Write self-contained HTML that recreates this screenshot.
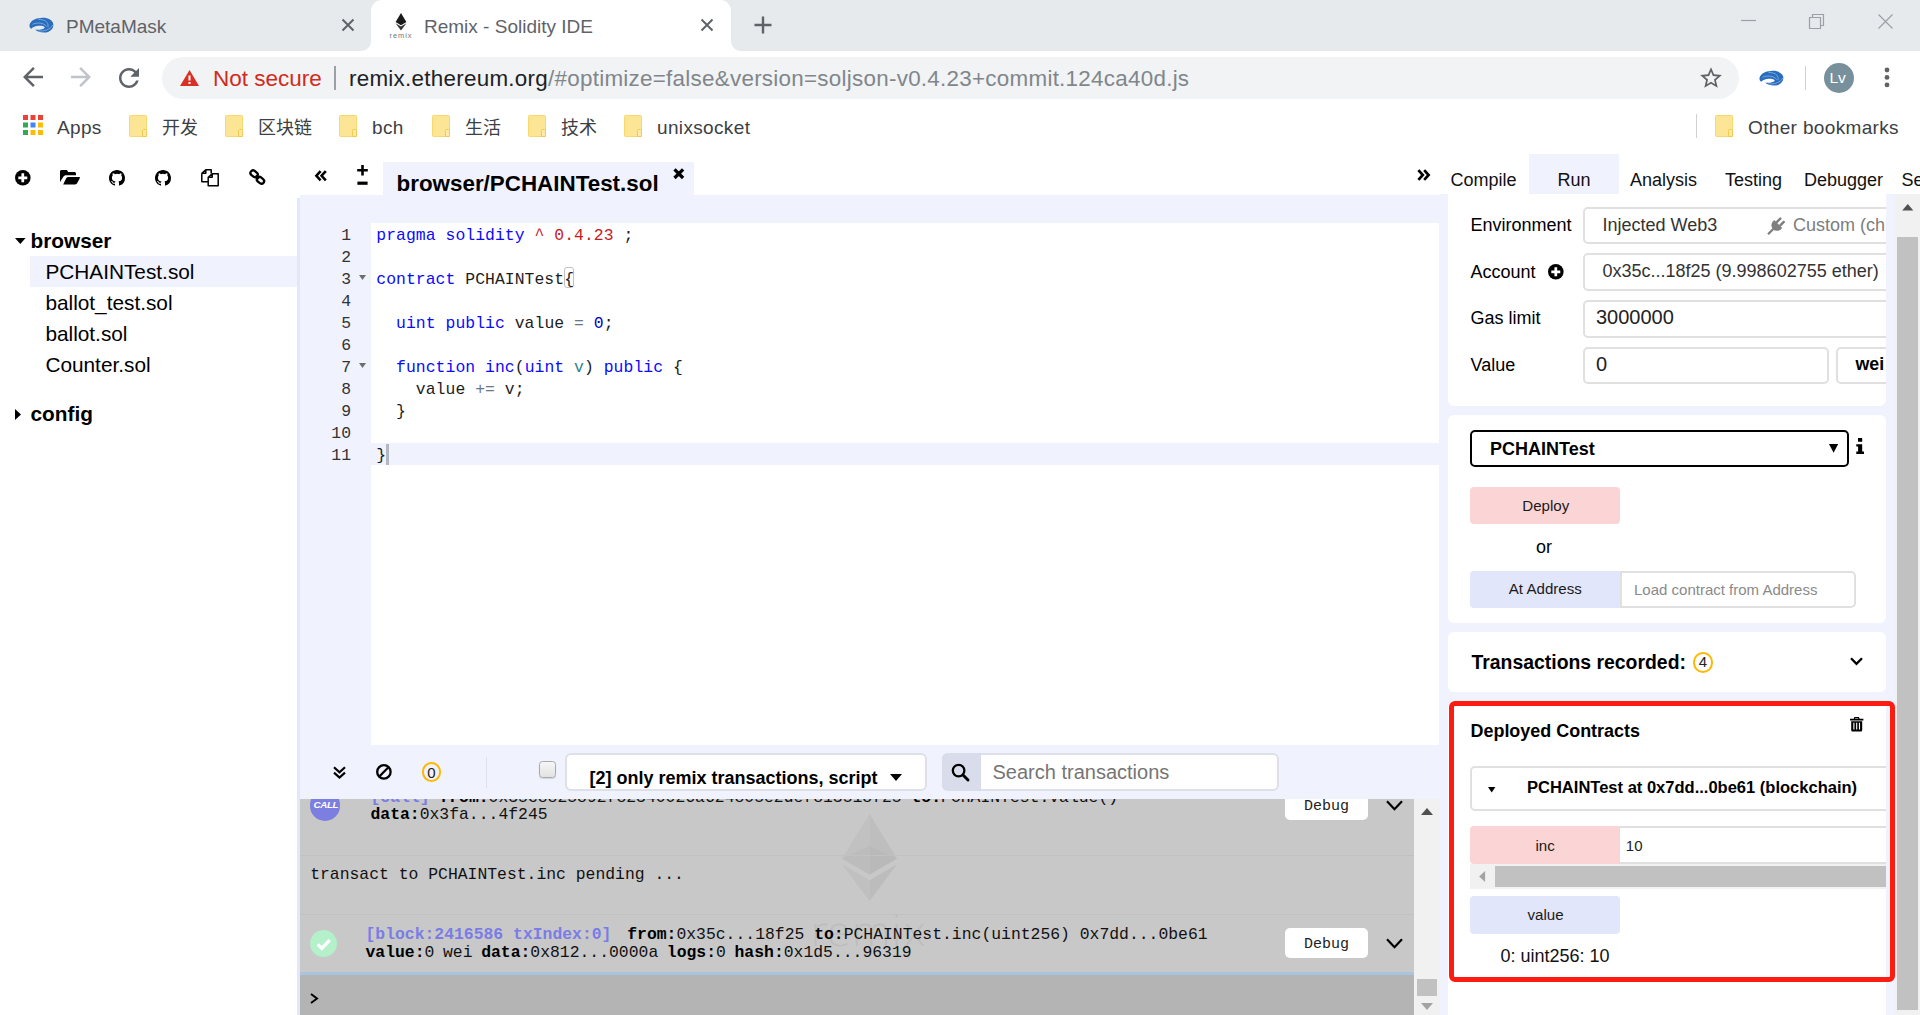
<!DOCTYPE html>
<html lang="en">
<head>
<meta charset="utf-8">
<title>Remix - Solidity IDE</title>
<style>
*{box-sizing:border-box;margin:0;padding:0}
html,body{width:1920px;height:1015px;overflow:hidden;background:#fff}
body{font-family:"Liberation Sans","Noto Sans CJK SC",sans-serif;color:#000;position:relative}
.abs{position:absolute}
.t{position:absolute;white-space:nowrap;line-height:1}
svg{position:absolute;overflow:visible}
/* ---------- browser chrome ---------- */
#tabstrip{left:0;top:0;width:1920px;height:51px;background:#e7eaed}
#acttab{left:371px;top:0;width:360px;height:51px;background:#fff;border-radius:11px 11px 0 0}
#acttab:before,#acttab:after{content:"";position:absolute;bottom:0;width:10px;height:10px}
#acttab:before{left:-10px;background:radial-gradient(circle at 0 0,#e7eaed 9.5px,#fff 10.5px)}
#acttab:after{right:-10px;background:radial-gradient(circle at 100% 0,#e7eaed 9.5px,#fff 10.5px)}
#toolbar{left:0;top:51px;width:1920px;height:99px;background:#fff}
#omni{left:162px;top:57px;width:1577px;height:42px;border-radius:21px;background:#f1f3f4}
.ui{font-family:"Liberation Sans","Noto Sans CJK SC",sans-serif;color:#3c4043}
.bm{font-size:19px;letter-spacing:.35px;color:#3c4043;top:117.5px}
.bm.cj{font-size:18px;letter-spacing:0;top:119px}
.fold{position:absolute;top:115px;width:18px;height:21.500px;border-radius:1.500px;background:#fde596;border:1px solid #f8d76f}
.fold:after{content:"";position:absolute;right:-1px;bottom:-1px;width:3.500px;height:6px;border:1px solid #f3c94f;border-radius:1.500px 1.500px 0 0;background:#fdeaa8}
/* ---------- remix ---------- */
#lav{left:300px;top:195px;width:1620px;height:820px;background:#f0f2fe}
#rtabsbg{left:298px;top:150px;width:1622px;height:45px;background:#fff}
#gut{left:320px;top:224.900px;width:31px;text-align:right;font:16.400px/22px "Liberation Mono",monospace;color:#333}
#code{left:376.300px;top:224.900px;font:16.400px/22px "Liberation Mono",monospace;color:#1d1d1d;letter-spacing:.05px}
#code .k{color:#0a0aff}#code .r{color:#c8191d}#code .o{color:#687687}#code .n{color:#0000cd}#code .f{color:#0a0aff}#code .p{color:#318495}
#term{left:300px;top:799px;width:1140px;height:216px;overflow:hidden}
.mono{font:16.400px/19px "Liberation Mono",monospace;color:#111}
.mono b{font-weight:bold;color:#000}.vi{color:#7a7ce6;font-weight:bold}
.dbg{left:985px;width:83px;height:30px;background:#fff;border-radius:5px}
.rt{font-size:18px;top:171px;color:#111}
#rp{left:1448px;top:195px;width:438px;height:820px;overflow:hidden}
#rpi{left:1px;top:0;width:437px;height:820px}
.card{left:-1px;width:438px;background:#fff;border-radius:6px}
.lb{font-size:18px}
.inp{background:#fff;border:2px solid #e0e0e0;border-radius:5px}
</style>
</head>
<body>
<!-- ======= BROWSER CHROME ======= -->
<div class="abs" id="tabstrip"></div>
<div class="abs" id="acttab"></div>
<div class="abs" id="toolbar"></div>
<div class="abs" id="omni"></div>

<!-- CHROME-CONTENT -->
<!-- tab 1 -->
<svg style="left:29px;top:17px" width="26" height="16" viewBox="0 0 26 16"><path d="M.5 8C1.500 4 6 1.200 12 1 18 .2 23.500 2.800 24.300 7 25 11.500 21 15.600 15 15.600 11 15.600 8 14.300 6 12.600 9.500 13.200 14.500 12.600 15.500 11 16.500 9.400 13 8.600 9.500 8.700 6.500 8.800 3.800 10 2.300 11.800 1 11.200.3 9.500.5 8Z" fill="#2b6dbd"/><path d="M3.500 7.300C8 5.200 15 5.600 17.600 9.600M9.500 2.600C14.500 2 20 4.600 19 10.200M9 13.900C15 14.600 21.500 12.600 23.800 8" stroke="#8db9ea" stroke-width=".75" fill="none"/></svg>
<div class="t ui" style="left:66px;top:17px;font-size:19px;color:#5f6368">PMetaMask</div>
<svg style="left:341px;top:18px" width="14" height="14" viewBox="0 0 14 14"><path d="M1.5 1.5L12.5 12.5M12.5 1.5L1.5 12.5" stroke="#5f6368" stroke-width="2" fill="none"/></svg>
<!-- tab 2 -->
<svg style="left:389px;top:11.500px" width="24" height="28" viewBox="0 0 24 28"><path d="M12 1L6.6 10 12 13.2 17.4 10Z" fill="#1a1a1a"/><path d="M12 14.4L6.6 11.2 12 18.6 17.4 11.2Z" fill="#333"/><text x="12" y="25.800" font-size="7.500" letter-spacing=".9" font-family="Liberation Sans,sans-serif" text-anchor="middle" fill="#777">remix</text></svg>
<div class="t ui" style="left:424px;top:17px;font-size:19px;color:#5f6368">Remix - Solidity IDE</div>
<svg style="left:700px;top:18px" width="14" height="14" viewBox="0 0 14 14"><path d="M1.5 1.5L12.5 12.5M12.5 1.5L1.5 12.5" stroke="#5f6368" stroke-width="2" fill="none"/></svg>
<svg style="left:754px;top:16px" width="18" height="18" viewBox="0 0 18 18"><path d="M9 0.5V17.5M0.5 9H17.5" stroke="#5f6368" stroke-width="2.4" fill="none"/></svg>
<!-- window controls -->
<svg style="left:1741px;top:13px" width="160" height="18" viewBox="0 0 160 18"><path d="M0 7.5H15" stroke="#9aa0a6" stroke-width="1.2" fill="none"/><path d="M68.5 4.5H79.5V15.5H68.5ZM71.5 4.5V1.5H82.5V12.5H79.5" stroke="#9aa0a6" stroke-width="1.2" fill="none"/><path d="M137.5 1.5L151.5 15.5M151.5 1.5L137.5 15.5" stroke="#9aa0a6" stroke-width="1.2" fill="none"/></svg>
<!-- nav buttons -->
<svg style="left:18px;top:62px" width="30" height="30" viewBox="0 0 24 24"><path d="M20 11H7.83l5.59-5.59L12 4l-8 8 8 8 1.41-1.41L7.83 13H20v-2z" fill="#5f6368"/></svg>
<svg style="left:66px;top:62px" width="30" height="30" viewBox="0 0 24 24"><path d="M12 4l-1.41 1.41L16.17 11H4v2h12.17l-5.58 5.59L12 20l8-8z" fill="#c0c3c7"/></svg>
<svg style="left:114px;top:62.5px" width="30" height="30" viewBox="0 0 24 24"><path d="M17.65 6.35C16.2 4.9 14.21 4 12 4c-4.42 0-7.99 3.58-7.99 8s3.57 8 7.99 8c3.73 0 6.84-2.55 7.73-6h-2.08c-.82 2.33-3.04 4-5.65 4-3.31 0-6-2.69-6-6s2.69-6 6-6c1.66 0 3.14.69 4.22 1.78L13 11h7V4l-2.35 2.35z" fill="#5f6368"/></svg>
<!-- omnibox content -->
<svg style="left:180px;top:70px" width="19" height="16" viewBox="0 0 19 16"><path d="M9.5 0L19 16H0Z" fill="#d93025"/><path d="M8.5 5.5h2v5h-2zM8.5 12h2v2h-2z" fill="#fff"/></svg>
<div class="t" style="left:213px;top:67.800px;font-size:22.5px;color:#d12a20">Not secure</div>
<div class="abs" style="left:334px;top:66px;width:2px;height:24px;background:#9aa0a6"></div>
<div class="t" style="left:349px;top:68px;font-size:22.4px;letter-spacing:0.27px;color:#202124">remix.ethereum.org<span style="color:#80868b">/#optimize=false&amp;version=soljson-v0.4.23+commit.124ca40d.js</span></div>
<svg style="left:1698px;top:65px" width="26" height="26" viewBox="0 0 24 24"><path d="M22 9.24l-7.19-.62L12 2 9.19 8.63 2 9.24l5.46 4.73L5.82 21 12 17.27 18.18 21l-1.63-7.03L22 9.24zM12 15.4l-3.76 2.27 1-4.28-3.32-2.88 4.38-.38L12 6.1l1.71 4.04 4.38.38-3.32 2.88 1 4.28L12 15.4z" fill="#5f6368"/></svg>
<svg style="left:1759px;top:69.5px" width="26" height="16" viewBox="0 0 26 16"><path d="M.5 8C1.500 4 6 1.200 12 1 18 .2 23.500 2.800 24.300 7 25 11.500 21 15.600 15 15.600 11 15.600 8 14.300 6 12.600 9.500 13.200 14.500 12.600 15.500 11 16.500 9.400 13 8.600 9.500 8.700 6.500 8.800 3.800 10 2.300 11.800 1 11.200.3 9.500.5 8Z" fill="#2b6dbd"/><path d="M3.500 7.300C8 5.200 15 5.600 17.600 9.600M9.500 2.600C14.500 2 20 4.600 19 10.200M9 13.900C15 14.600 21.500 12.600 23.800 8" stroke="#8db9ea" stroke-width=".75" fill="none"/></svg>
<div class="abs" style="left:1805px;top:66px;width:1px;height:24px;background:#d0d3d6"></div>
<div class="abs" style="left:1824px;top:63px;width:30px;height:30px;border-radius:15px;background:#78909c"></div>
<div class="t" style="left:1829.5px;top:70px;font-size:15.5px;color:#fff">Lv</div>
<svg style="left:1884px;top:67px" width="6" height="21" viewBox="0 0 6 21"><circle cx="3" cy="3" r="2.4" fill="#5f6368"/><circle cx="3" cy="10.4" r="2.4" fill="#5f6368"/><circle cx="3" cy="17.9" r="2.4" fill="#5f6368"/></svg>
<!-- bookmarks -->
<svg style="left:23px;top:115px" width="20" height="20" viewBox="0 0 20 20"><g><rect x="0" y="0" width="5" height="5" fill="#ea4335"/><rect x="7.5" y="0" width="5" height="5" fill="#ea4335"/><rect x="15" y="0" width="5" height="5" fill="#ea4335"/><rect x="0" y="7.5" width="5" height="5" fill="#34a853"/><rect x="7.5" y="7.5" width="5" height="5" fill="#4285f4"/><rect x="15" y="7.5" width="5" height="5" fill="#fbbc05"/><rect x="0" y="15" width="5" height="5" fill="#34a853"/><rect x="7.5" y="15" width="5" height="5" fill="#fbbc05"/><rect x="15" y="15" width="5" height="5" fill="#fbbc05"/></g></svg>
<div class="t bm" style="left:57px">Apps</div>
<div class="fold" style="left:129px"></div><div class="t bm cj" style="left:162px">开发</div>
<div class="fold" style="left:225px"></div><div class="t bm cj" style="left:258px">区块链</div>
<div class="fold" style="left:339px"></div><div class="t bm" style="left:372px">bch</div>
<div class="fold" style="left:432px"></div><div class="t bm cj" style="left:465px">生活</div>
<div class="fold" style="left:528px"></div><div class="t bm cj" style="left:561px">技术</div>
<div class="fold" style="left:624px"></div><div class="t bm" style="left:657px">unixsocket</div>
<div class="abs" style="left:1696px;top:114px;width:1px;height:24px;background:#d0d3d6"></div>
<div class="fold" style="left:1715px"></div><div class="t bm" style="left:1748px">Other bookmarks</div>
<!-- /CHROME-CONTENT -->

<!-- ======= REMIX PAGE ======= -->
<div class="abs" id="rtabsbg"></div>
<div class="abs" id="lav"></div>

<!-- LEFT-PANEL -->
<!-- left panel icons -->
<svg style="left:14.8px;top:169.6px" width="15.6" height="15.6" viewBox="0 0 16 16"><circle cx="8" cy="8" r="8" fill="#000"/><path d="M6.6 3.4h2.8v3.2h3.2v2.8H9.4v3.2H6.6V9.4H3.4V6.600H6.6z" fill="#fff"/></svg>
<svg style="left:60px;top:169.5px" width="20" height="14.4" viewBox="0 0 20 14.4"><path d="M0 12V1.6C0 .7.7 0 1.6 0h4.6c.9 0 1.6.7 1.6 1.600v.5h6.600c.9 0 1.6.7 1.6 1.600v1.500H6.200c-1.300 0-2.400.6-3 1.700z" fill="#000"/><path d="M3.200 14.4 6.200 8.300c.4-.8 1.300-1.400 2.200-1.400H19c.8 0 1.200.6.800 1.300l-2.700 5c-.400.700-1.200 1.200-2 1.200z" fill="#000"/></svg>
<svg style="left:109.300px;top:169.500px" width="16" height="16" viewBox="0 0 16 16"><path d="M8 0C3.580 0 0 3.580 0 8c0 3.540 2.290 6.530 5.470 7.590.4.070.55-.17.55-.38 0-.19-.01-.82-.01-1.490-2.010.37-2.530-.49-2.690-.94-.09-.23-.48-.94-.82-1.130-.28-.15-.68-.52-.01-.53.63-.01 1.080.58 1.230.82.720 1.210 1.870.87 2.330.66.070-.52.28-.87.51-1.070-1.780-.2-3.640-.89-3.640-3.950 0-.87.31-1.590.82-2.150-.08-.2-.36-1.020.08-2.120 0 0 .67-.21 2.200.82a7.400 7.400 0 0 1 4 0c1.530-1.040 2.200-.82 2.200-.82.44 1.100.16 1.920.08 2.120.51.56.82 1.270.82 2.150 0 3.070-1.870 3.750-3.650 3.950.29.25.54.73.54 1.480 0 1.070-.01 1.930-.01 2.200 0 .21.15.46.55.38A8.013 8.013 0 0 0 16 8c0-4.420-3.580-8-8-8z" fill="#000" fill-rule="evenodd"/></svg>
<svg style="left:154.800px;top:169.500px" width="16" height="16" viewBox="0 0 16 16"><path d="M8 0C3.580 0 0 3.580 0 8c0 3.540 2.290 6.530 5.470 7.590.4.070.55-.17.55-.38 0-.19-.01-.82-.01-1.490-2.010.37-2.530-.49-2.690-.94-.09-.23-.48-.94-.82-1.130-.28-.15-.68-.52-.01-.53.63-.01 1.080.58 1.230.82.720 1.210 1.870.87 2.330.66.070-.52.28-.87.51-1.070-1.780-.2-3.640-.89-3.640-3.950 0-.87.31-1.590.82-2.150-.08-.2-.36-1.020.08-2.120 0 0 .67-.21 2.200.82a7.400 7.400 0 0 1 4 0c1.530-1.040 2.200-.82 2.200-.82.44 1.100.16 1.920.08 2.120.51.56.82 1.270.82 2.150 0 3.070-1.870 3.750-3.650 3.950.29.25.54.73.54 1.480 0 1.070-.01 1.930-.01 2.200 0 .21.15.46.55.38A8.013 8.013 0 0 0 16 8c0-4.420-3.580-8-8-8z" fill="#000" fill-rule="evenodd"/></svg>
<svg style="left:200.500px;top:168.700px" width="18" height="17.600" viewBox="0 0 18 17.6"><path d="M.8 4.200 4.800.800H10.200V4.400M.8 4.200H4.800V.800M.8 4.200V12.800H7" stroke="#000" stroke-width="1.500" fill="none" stroke-linejoin="round"/><path d="M7.200 8.200 11.200 4.800H17.200V16.800H7.200ZM7.200 8.200H11.200V4.800" stroke="#000" stroke-width="1.500" fill="#fff" stroke-linejoin="round"/></svg>
<svg style="left:248.600px;top:169px" width="16.600" height="16.200" viewBox="0 0 16.6 16.2"><g fill="none" stroke="#000" stroke-width="2.300"><rect x="-3.900" y="-2.600" width="7.800" height="5.200" rx="2.600" transform="translate(5.100 4.800) rotate(38)"/><rect x="-3.900" y="-2.600" width="7.800" height="5.200" rx="2.600" transform="translate(11.500 11.300) rotate(38)"/><path d="M6.800 6.300 9.800 9.800" stroke-width="2"/></g></svg>
<!-- tree -->
<div class="abs" style="left:30px;top:256px;width:268px;height:31px;background:#f0f2fe"></div>
<svg style="left:14.800px;top:238px" width="10.600" height="6" viewBox="0 0 10.6 6"><path d="M0 0H10.600L5.300 6Z" fill="#000"/></svg>
<div class="t" style="left:30.500px;top:231px;font-size:20.800px;font-weight:bold">browser</div>
<div class="t" style="left:45.4px;top:262px;font-size:20.8px">PCHAINTest.sol</div>
<div class="t" style="left:45.4px;top:293px;font-size:20.8px">ballot_test.sol</div>
<div class="t" style="left:45.4px;top:324px;font-size:20.8px">ballot.sol</div>
<div class="t" style="left:45.4px;top:355px;font-size:20.8px">Counter.sol</div>
<svg style="left:15px;top:408.600px" width="6" height="11" viewBox="0 0 6 11"><path d="M0 0V11L6 5.500Z" fill="#000"/></svg>
<div class="t" style="left:30.500px;top:403.800px;font-size:20.800px;font-weight:bold">config</div>
<!-- drag bar -->
<div class="abs" style="left:297px;top:198px;width:3px;height:817px;background:#e2e7fb"></div>
<!-- /LEFT-PANEL -->

<!-- EDITOR -->
<!-- editor tab bar -->
<svg style="left:315px;top:170px" width="12" height="11.500" viewBox="0 0 12 11.5"><path d="M5.600 1.100 1.400 5.750 5.600 10.400M10.800 1.100 6.600 5.750 10.800 10.400" stroke="#000" stroke-width="2.600" fill="none"/></svg>
<svg style="left:357px;top:165px" width="11" height="21" viewBox="0 0 11 21"><path d="M5.500 0V10.600M.2 5.300H10.800" stroke="#000" stroke-width="2.600" fill="none"/><path d="M.4 18.200H10.600" stroke="#000" stroke-width="3.200" fill="none"/></svg>
<div class="abs" style="left:383px;top:162px;width:310.500px;height:34px;background:#f0f2fe"></div>
<div class="t" style="left:396.500px;top:173px;font-size:22.400px;font-weight:bold">browser/PCHAINTest.sol</div>
<svg style="left:672.800px;top:167.800px" width="11.600" height="11.400" viewBox="0 0 11.6 11.4"><path d="M1.500 1.400 10.100 10M10.100 1.400 1.500 10" stroke="#000" stroke-width="3.300" fill="none"/></svg>
<svg style="left:1416.500px;top:168.800px" width="13" height="12" viewBox="0 0 13 12"><path d="M1.400 1.200 5.800 6 1.400 10.800M7.200 1.200 11.600 6 7.200 10.800" stroke="#000" stroke-width="2.700" fill="none"/></svg>
<!-- code area -->
<div class="abs" style="left:371px;top:223px;width:1068px;height:522px;background:#fff"></div>
<div class="abs" style="left:371px;top:443px;width:1068px;height:22px;background:#f0f2fe"></div>
<div class="abs" id="gut">1<br>2<br>3<br>4<br>5<br>6<br>7<br>8<br>9<br>10<br>11</div>
<svg style="left:358.500px;top:275.300px" width="7" height="5" viewBox="0 0 7 5"><path d="M0 0H7L3.500 5Z" fill="#6e6e6e"/></svg>
<svg style="left:358.500px;top:363.300px" width="7" height="5" viewBox="0 0 7 5"><path d="M0 0H7L3.500 5Z" fill="#6e6e6e"/></svg>
<div class="abs" style="left:564px;top:267px;width:9.500px;height:21px;border:1px solid #c0c0c0;border-radius:3px"></div>
<div class="abs" style="left:385.800px;top:444px;width:3px;height:20.500px;background:#b4b7c2"></div>
<pre class="abs" id="code"><span class="k">pragma solidity</span> <span class="r">^ 0.4.23</span> ;

<span class="k">contract</span> PCHAINTest{

  <span class="k">uint</span> <span class="k">public</span> value <span class="o">=</span> <span class="n">0</span>;

  <span class="k">function</span> <span class="f">inc</span>(<span class="k">uint</span> <span class="p">v</span>) <span class="k">public</span> {
    value <span class="o">+=</span> v;
  }

}</pre>
<!-- /EDITOR -->

<!-- TERMINAL -->
<!-- terminal toolbar -->
<svg style="left:333.300px;top:765.800px" width="13" height="12.600" viewBox="0 0 13 12.6"><path d="M1 1.300 6.500 6.200 12 1.300M1 6.600 6.500 11.500 12 6.600" stroke="#000" stroke-width="2.200" fill="none"/></svg>
<svg style="left:376.400px;top:763.800px" width="15.800" height="15.800" viewBox="0 0 15.800 15.800"><circle cx="7.900" cy="7.900" r="6.700" stroke="#000" stroke-width="2.300" fill="none"/><path d="M12.500 3.300 3.300 12.500" stroke="#000" stroke-width="2.300"/></svg>
<div class="abs" style="left:421.600px;top:762.300px;width:19.600px;height:19.600px;border:2px solid #ffb700;border-radius:50%"></div>
<div class="t" style="left:427.200px;top:764.500px;font-size:15px;color:#222">0</div>
<div class="abs" style="left:486px;top:757px;width:1px;height:31px;background:#dde1f0"></div>
<div class="abs" style="left:539px;top:761.300px;width:16.500px;height:16.500px;border:1px solid #a9a9a9;border-radius:3.500px;background:linear-gradient(#f6f6f6,#e2e2e2);box-shadow:0 1px 1px rgba(0,0,0,.12)"></div>
<div class="abs" style="left:565px;top:753.300px;width:361.500px;height:37.500px;background:#fff;border:2px solid #dddfe9;border-radius:6px"></div>
<div class="t" style="left:589.500px;top:768.500px;font-size:18px;font-weight:bold">[2] only remix transactions, script</div>
<svg style="left:889.500px;top:773.500px" width="12" height="7" viewBox="0 0 12 7"><path d="M0 0H12L6 7Z" fill="#000"/></svg>
<div class="abs" style="left:942px;top:753.300px;width:337px;height:37.500px;background:#fff;border:2px solid #dddfe9;border-radius:6px"></div>
<div class="abs" style="left:942px;top:753.300px;width:38.500px;height:37.500px;background:#d9dcea;border-radius:6px 0 0 6px"></div>
<svg style="left:951px;top:762.500px" width="19" height="19" viewBox="0 0 19 19"><circle cx="7.600" cy="7.600" r="5.800" stroke="#000" stroke-width="2.300" fill="none"/><path d="M12 12 17 17" stroke="#000" stroke-width="2.900" stroke-linecap="round"/></svg>
<div class="t" style="left:992.500px;top:762px;font-size:20px;color:#757575">Search transactions</div>
<!-- terminal log -->
<div class="abs" id="term">
  <div class="abs" style="left:0;top:0;width:1114px;height:173px;background:#c8c8c8"></div>
  <svg style="left:541.500px;top:13px" width="55" height="91" viewBox="0 0 58 92"><path d="M29 0 0 47 29 64Z" fill="#c1c1c1"/><path d="M29 0V64L58 47Z" fill="#bebebe"/><path d="M29 34 0 47 29 64Z" fill="#bcbcbc"/><path d="M29 34 58 47 29 64Z" fill="#b9b9b9"/><path d="M29 70 0 53 29 92Z" fill="#c0c0c0"/><path d="M29 70V92L58 53Z" fill="#bcbcbc"/></svg>
  <div class="t" style="left:510px;top:113px;font-family:'DejaVu Sans Light','DejaVu Sans',sans-serif;font-weight:200;font-size:41px;color:#bdbdbd">remix</div>
  <div class="abs" style="left:0;top:55.500px;width:1114px;height:1px;background:#c1c1c1"></div>
  <div class="abs" style="left:0;top:114.500px;width:1114px;height:1px;background:#c1c1c1"></div>
  <div class="abs" style="left:9.500px;top:-9px;width:30.500px;height:30.500px;border-radius:50%;background:#7c7ee0"></div>
  <div class="t" style="left:13.500px;top:.5px;font-size:9.800px;font-weight:bold;font-style:italic;color:#fff;letter-spacing:-.35px">CALL</div>
  <div class="t mono" style="left:70.500px;top:-11.500px"><span class="vi">[call]</span> <b>from:</b>0x35c8825892f82340026a624805e2def813518f25 <b>to:</b>PCHAINTest.value()</div>
  <div class="t mono" style="left:70.500px;top:6px"><b>data:</b>0x3fa...4f245</div>
  <div class="t mono" style="left:10.200px;top:66px">transact to PCHAINTest.inc pending ...</div>
  <div class="abs" style="left:9.500px;top:131px;width:27px;height:27px;border-radius:50%;background:#b4f0ca"></div>
  <svg style="left:15.500px;top:138.500px" width="15.500" height="12.500" viewBox="0 0 15.500 12.500"><path d="M1.700 6.400 5.800 10.300 13.800 2" stroke="#fff" stroke-width="3.300" fill="none"/></svg>
  <div class="t mono" style="left:65.500px;top:125.500px"><span class="vi" style="margin-right:6px">[block:2416586 txIndex:0]</span> <b>from:</b>0x35c...18f25 <b>to:</b>PCHAINTest.inc(uint256) 0x7dd...0be61</div>
  <div class="t mono" style="left:65.500px;top:144.300px;word-spacing:-1.200px"><b>value:</b>0 wei <b>data:</b>0x812...0000a <b>logs:</b>0 <b>hash:</b>0x1d5...96319</div>
  <div class="abs dbg" style="top:-9.500px"></div><div class="t mono" style="left:1004px;top:-2px;color:#222;font-size:15px">Debug</div>
  <div class="abs dbg" style="top:129px"></div><div class="t mono" style="left:1004px;top:135.500px;color:#222;font-size:15px">Debug</div>
  <svg style="left:1085.500px;top:1px" width="17" height="11" viewBox="0 0 17 11"><path d="M1 1.200 8.500 9.200 16 1.200" stroke="#000" stroke-width="2.200" fill="none"/></svg>
  <svg style="left:1085.500px;top:138.500px" width="17" height="11" viewBox="0 0 17 11"><path d="M1 1.200 8.500 9.200 16 1.200" stroke="#000" stroke-width="2.200" fill="none"/></svg>
  <div class="abs" style="left:0;top:173px;width:1114px;height:3px;background:#a9c5dd"></div>
  <div class="abs" style="left:0;top:175.700px;width:1114px;height:41px;background:#b4b4b4"></div>
  <svg style="left:9.500px;top:193.500px" width="8" height="11" viewBox="0 0 8 11"><path d="M1 1 7 5.500 1 10" stroke="#000" stroke-width="2" fill="none"/></svg>
  <!-- terminal scrollbar -->
  <div class="abs" style="left:1114px;top:0;width:25.500px;height:217px;background:#f1f1f1"></div>
  <svg style="left:1120.500px;top:9px" width="12" height="7" viewBox="0 0 12 7"><path d="M0 7H12L6 0Z" fill="#505050"/></svg>
  <div class="abs" style="left:1116.500px;top:179.500px;width:20.500px;height:17px;background:#c1c1c1"></div>
  <svg style="left:1120.500px;top:204px" width="12" height="7" viewBox="0 0 12 7"><path d="M0 0H12L6 7Z" fill="#a3a3a3"/></svg>
</div>
<!-- /TERMINAL -->

<!-- RIGHT-PANEL -->
<div class="abs" style="left:1440px;top:194px;width:480px;height:2px;background:#f0f2fe"></div>
<div class="abs" style="left:1448px;top:194px;width:438px;height:2px;background:#fff"></div>
<!-- right tabs -->
<div class="abs" style="left:1529px;top:154px;width:90px;height:40px;background:#f0f2fe"></div>
<div class="t rt" style="left:1450.500px">Compile</div>
<div class="t rt" style="left:1557.500px">Run</div>
<div class="t rt" style="left:1630px">Analysis</div>
<div class="t rt" style="left:1725px">Testing</div>
<div class="t rt" style="left:1804px">Debugger</div>
<div class="t rt" style="left:1901.500px">Se</div>
<!-- right panel clip -->
<div class="abs" id="rp"><div class="abs" id="rpi">
 <!-- card 1 -->
 <div class="abs card" style="top:0;height:210.500px;border-radius:0 0 6px 6px"></div>
 <div class="t lb" style="left:21.500px;top:20.700px">Environment</div>
 <div class="abs inp" style="left:134px;top:12px;width:330px;height:37px"></div>
 <div class="t lb" style="left:153.500px;top:20.700px;color:#333">Injected Web3</div>
 <svg style="left:318px;top:20.600px" width="19" height="18.500" viewBox="0 0 19 18.500"><g fill="#808080" transform="translate(11.300 8) rotate(45)"><path d="M-5.600 0H5.600V1.800A5.600 5.600 0 0 1 -5.600 1.800Z"/><rect x="-3.700" y="-6.500" width="2.500" height="7" rx="1.200"/><rect x="1.200" y="-6.500" width="2.500" height="7" rx="1.200"/><rect x="-1.200" y="6" width="2.400" height="8.500"/></g></svg>
 <div class="t lb" style="left:344px;top:20.700px;color:#7d7d7d">Custom (ch</div>
 <div class="t lb" style="left:21.500px;top:67.700px">Account</div>
 <svg style="left:99px;top:69.200px" width="15.600" height="15.600" viewBox="0 0 16 16"><circle cx="8" cy="8" r="8" fill="#000"/><path d="M6.600 3.400h2.800v3.200h3.200v2.800H9.400v3.200H6.600V9.400H3.400V6.600H6.600z" fill="#fff"/></svg>
 <div class="abs inp" style="left:134px;top:58px;width:330px;height:37.500px"></div>
 <div class="t lb" style="left:153.500px;top:66.700px;color:#333">0x35c...18f25 (9.998602755 ether)</div>
 <div class="t lb" style="left:21.500px;top:113.700px">Gas limit</div>
 <div class="abs inp" style="left:134px;top:105px;width:330px;height:37.500px"></div>
 <div class="t" style="left:147px;top:112px;font-size:20px;color:#222">3000000</div>
 <div class="t lb" style="left:21.500px;top:161.200px">Value</div>
 <div class="abs inp" style="left:134px;top:151.500px;width:245.500px;height:37.500px"></div>
 <div class="t" style="left:147px;top:158.500px;font-size:20px;color:#222">0</div>
 <div class="abs inp" style="left:386.500px;top:151.500px;width:80px;height:37.500px"></div>
 <div class="t" style="left:406.500px;top:160.500px;font-size:17.800px;font-weight:bold">wei</div>
 <!-- card 2 -->
 <div class="abs card" style="top:220px;height:208px"></div>
 <div class="abs" style="left:20.500px;top:235px;width:379px;height:37px;border:2px solid #000;border-radius:5px;background:#fff"></div>
 <div class="t" style="left:41px;top:245px;font-size:18px;font-weight:bold">PCHAINTest</div>
 <svg style="left:380.300px;top:248.700px" width="9.200" height="8.800" viewBox="0 0 9.400 9"><path d="M0 0H9.400L4.700 9Z" fill="#000"/></svg>
 <svg style="left:407px;top:243px" width="8.200" height="16" viewBox="0 0 8.200 16"><path d="M2 0H6.200V3.800H2ZM.3 6.300H6.200V13.600H8V16H.3V13.600H2.100V8.600H.3Z" fill="#000"/></svg>
 <div class="abs" style="left:21px;top:292px;width:150px;height:37px;background:#fbd5d5;border-radius:4px"></div>
 <div class="t" style="left:73.300px;top:302.800px;font-size:15.100px;color:#1a1a1a">Deploy</div>
 <div class="t lb" style="left:87px;top:343.200px">or</div>
 <div class="abs inp" style="left:171px;top:376px;width:235.500px;height:37px;border-radius:0 5px 5px 0"></div>
 <div class="abs" style="left:21px;top:376px;width:150px;height:37px;background:#e2e6fb;border-radius:4px 0 0 4px"></div>
 <div class="t" style="left:59.800px;top:386px;font-size:15.100px;color:#1a1a1a">At Address</div>
 <div class="t" style="left:185px;top:386.800px;font-size:15px;color:#8a8a8a">Load contract from Address</div>
 <!-- card 3 -->
 <div class="abs card" style="top:437px;height:60px"></div>
 <div class="t" style="left:22.500px;top:458.200px;font-size:19.400px;font-weight:bold">Transactions recorded:</div>
 <div class="abs" style="left:243.500px;top:457px;width:20.500px;height:20.500px;border:2px solid #ffb700;border-radius:50%"></div>
 <div class="t" style="left:249.700px;top:459px;font-size:15px;color:#222">4</div>
 <svg style="left:400.700px;top:461.600px" width="13" height="8.500" viewBox="0 0 13 8.500"><path d="M1 1.200 6.500 6.800 12 1.200" stroke="#000" stroke-width="2.300" fill="none"/></svg>
 <!-- card 4 -->
 <div class="abs card" style="top:506px;height:320px"></div>
 <div class="t" style="left:21.500px;top:528.300px;font-size:17.950px;font-weight:bold">Deployed Contracts</div>
 <svg style="left:401px;top:522px" width="13.400" height="14.600" viewBox="0 0 13.400 14.600"><path d="M4.400 0H9L9.600 1.800H13.400V3.400H0V1.800H3.800ZM5.200 1.200 5 1.800H8.400L8.200 1.200ZM1.200 4.200H12.200V13C12.200 13.900 11.500 14.600 10.600 14.600H2.800C1.900 14.600 1.200 13.900 1.200 13Z" fill="#000"/><path d="M3.900 5.800V12.600M6.700 5.800V12.600M9.500 5.800V12.600" stroke="#fff" stroke-width="1.100"/></svg>
 <div class="abs inp" style="left:21px;top:570.500px;width:460px;height:45.500px"></div>
 <svg style="left:39px;top:592px" width="7.400" height="5.600" viewBox="0 0 7.400 5.600"><path d="M0 0H7.400L3.700 5.600Z" fill="#000"/></svg>
 <div class="t" style="left:78px;top:585.200px;font-size:16.520px;font-weight:bold">PCHAINTest at 0x7dd...0be61 (blockchain)</div>
 <div class="abs inp" style="left:171px;top:631px;width:300px;height:38px;border-radius:0;border-left:0"></div>
 <div class="abs" style="left:21px;top:631px;width:150px;height:38px;background:#fbd5d5;border-radius:4px 0 0 4px"></div>
 <div class="t" style="left:86.500px;top:643px;font-size:15.100px;color:#1a1a1a">inc</div>
 <div class="t" style="left:176.800px;top:642.500px;font-size:15px;color:#222">10</div>
 <div class="abs" style="left:21px;top:669.300px;width:420px;height:24.500px;background:#f1f1f1"></div>
 <div class="abs" style="left:46px;top:671px;width:400px;height:20.700px;background:#c1c1c1"></div>
 <svg style="left:29.800px;top:675.700px" width="6.200" height="11" viewBox="0 0 6 11"><path d="M6 0V11L0 5.500Z" fill="#a3a3a3"/></svg>
 <div class="abs" style="left:21px;top:701px;width:150px;height:38px;background:#e2e6fb;border-radius:4px"></div>
 <div class="t" style="left:78.500px;top:711.500px;font-size:15.100px;color:#1a1a1a">value</div>
 <div class="t lb" style="left:51.500px;top:751.700px;color:#111">0: uint256: 10</div>
</div></div>
<!-- red annotation box -->
<div class="abs" style="left:1449px;top:701px;width:446px;height:281px;border:5px solid #fb1d12;border-radius:6px"></div>
<!-- right scrollbar -->
<div class="abs" style="left:1895px;top:194px;width:25px;height:821px;background:#f1f1f1"></div>
<svg style="left:1901.800px;top:203.500px" width="11.500" height="6.500" viewBox="0 0 12 7"><path d="M0 7H12L6 0Z" fill="#505050"/></svg>
<div class="abs" style="left:1897px;top:237px;width:21px;height:773px;background:#c1c1c1"></div>
<!-- /RIGHT-PANEL -->

</body>
</html>
